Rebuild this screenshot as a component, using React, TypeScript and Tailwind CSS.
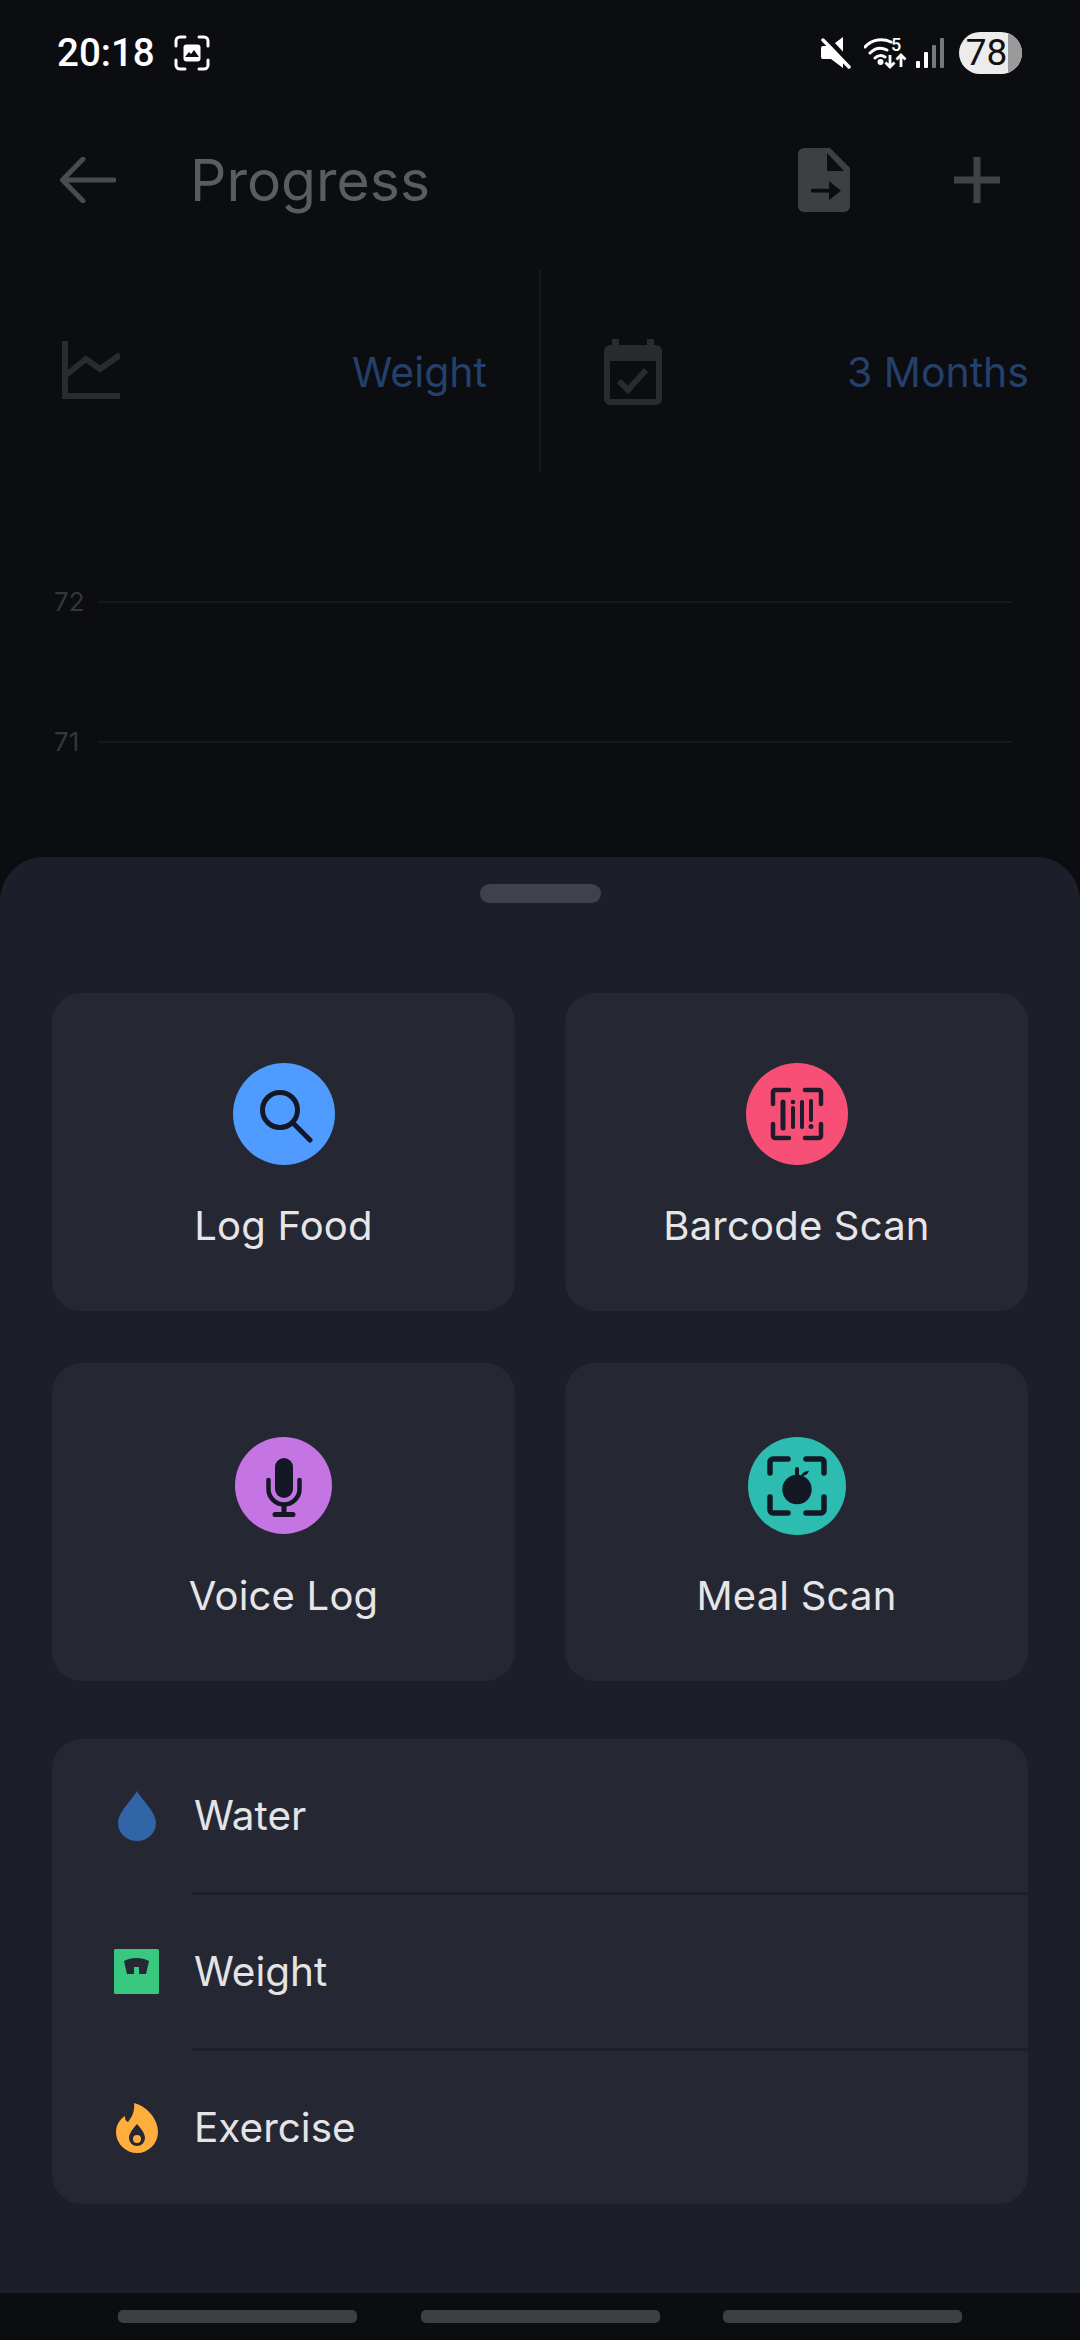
import React from "react";

const ActionCard = ({ label, color, size, top, gap, children }: { label: string; color: string; size: string; top: string; gap: string; children: React.ReactNode }) => (
  <div className={`h-[318px] rounded-[30px] bg-[#252833] flex flex-col items-center ${top}`}>
    <div className={`rounded-full flex items-center justify-center ${size} ${color}`}>{children}</div>
    <div className={`text-[40px] leading-[48px] text-[#e6e6e8] tracking-[0.2px] ${gap}`}>{label}</div>
  </div>
);

const Row = ({ label, children }: { label: string; children: React.ReactNode }) => (
  <div className="h-[153px] flex items-center">
    <div className="w-[142px] pl-[62px] flex items-center"><div className="w-[45px] flex justify-center">{children}</div></div>
    <div className="text-[40.5px] leading-[48px] text-[#e4e4e6]">{label}</div>
  </div>
);

export default function App() {
  return (
    <div className="w-[1080px] h-[2340px] bg-[#0b0d11] flex flex-col overflow-hidden font-['Inter',sans-serif]">
      <div className="h-[857px] flex flex-col">
        {/* status bar */}
        <div className="h-[105px] pl-[57px] pr-[58px] flex items-center justify-between">
          <div className="flex items-center gap-[19px]">
            <span className="font-['Roboto',sans-serif] font-medium text-[38.5px] leading-[48px] text-white">20:18</span>
            <svg width="36" height="36" viewBox="0 0 36 36" fill="none">
              <path d="M2 11V6a4 4 0 0 1 4-4h5M25 2h5a4 4 0 0 1 4 4v5M34 25v5a4 4 0 0 1-4 4h-5M11 34H6a4 4 0 0 1-4-4v-5" stroke="#fff" strokeWidth="3" strokeLinecap="round" />
              <rect x="9.500" y="9.500" width="17" height="17" rx="3" fill="#fff" />
              <path d="M11 22l4-5 2 2 3-4 5 7z" fill="#0b0d11" />
            </svg>
          </div>
          <div className="flex items-center">
            <svg width="30" height="32" viewBox="0 0 30 32" className="mr-[13px]">
              <path d="M22 0v31L10 22H2a2 2 0 0 1-2-2v-9a2 2 0 0 1 2-2h8z" fill="#fff" />
              <path d="M4 -1L32 29" stroke="#0b0d11" strokeWidth="5" />
              <path d="M2 3l26 27" stroke="#fff" strokeWidth="3.500" strokeLinecap="round" />
            </svg>
            <svg width="44" height="44" viewBox="0 -6 44 44" fill="none" className="mr-[8px]">
              <path d="M1 10C8 2 19 1 27 5M6 16c5-5 11-6 17-3M11 21c3-3 7-3 10-1" stroke="#fff" strokeWidth="3" strokeLinecap="round" />
              <circle cx="16.500" cy="25" r="3" fill="#fff" />
              <path d="M26 18v12M21.500 25.500l4.500 4.500 4.500-4.500M37 30V18M32.500 22.500l4.500-4.500 4.500 4.500" stroke="#fff" strokeWidth="2.800" />
              <text x="27" y="14" fontSize="18" fontWeight="500" fill="#fff" fontFamily="Roboto">5</text>
            </svg>
            <svg width="28" height="30" viewBox="0 0 28 30" className="mr-[15px]">
              <rect x="0" y="23" width="4" height="7" rx="1" fill="#fff" />
              <rect x="8" y="14" width="4" height="16" rx="1" fill="#fff" />
              <rect x="16" y="7" width="4" height="23" rx="1" fill="#77787a" />
              <rect x="24" y="0" width="4" height="30" rx="1" fill="#77787a" />
            </svg>
            <div className="w-[63px] h-[42px] rounded-full bg-[#ececec] overflow-hidden flex relative">
              <div className="flex-1 text-center text-[#111] font-['Roboto',sans-serif] text-[37px] leading-[42px] pl-[2px] z-10 -mr-[4px]">78</div>
              <div className="w-[14px] bg-[#9a9a9a]" />
            </div>
          </div>
        </div>
        {/* header */}
        <div className="mt-[13px] h-[124px] pl-[60px] pr-[80px] flex items-center">
          <svg width="56" height="46" viewBox="0 0 56 46" fill="none">
            <path d="M54 23H3M23 2L2.500 23 23 44" stroke="#4a4b4e" strokeWidth="5" strokeLinecap="round" strokeLinejoin="round" />
          </svg>
          <div className="ml-[74px] pt-[1px] text-[57px] leading-[68px] text-[#5b5c5f]">Progress</div>
          <svg width="52" height="64" viewBox="0 0 52 64" className="ml-auto">
            <path d="M6 0h26l20 20v38a6 6 0 0 1-6 6H6a6 6 0 0 1-6-6V6a6 6 0 0 1 6-6z" fill="#3e3f42" />
            <path d="M29 5v18h17z" fill="#0b0d11" />
            <path d="M13 43h18v-8l12 10-12 10v-8H13z" fill="#0b0d11" transform="translate(0 -1) scale(1 0.97)" />
          </svg>
          <svg width="46" height="46" viewBox="0 0 46 46" className="ml-[104px]">
            <path d="M23 0v46M0 23h46" stroke="#414244" strokeWidth="7" />
          </svg>
        </div>
        {/* selectors */}
        <div className="mt-[28px] h-[203px] flex items-center">
          <div className="w-[539px] h-full pl-[62px] pr-[52px] flex items-center justify-between">
            <svg width="58" height="58" viewBox="0 0 58 58" fill="none" className="-mt-[3px]">
              <path d="M3 0v55h55" stroke="#2a2b2e" strokeWidth="6" />
              <path d="M3 35l21-17 14 10L58 14" stroke="#2a2b2e" strokeWidth="6" />
            </svg>
            <span className="text-[41px] leading-[48px] text-[#24406b]">Weight</span>
          </div>
          <div className="w-[2px] h-full bg-[#17191e]" />
          <div className="flex-1 h-full pl-[63px] pr-[51px] flex items-center justify-between">
            <svg width="58" height="66" viewBox="0 0 58 66">
              <path d="M8 0h7v6h28V0h7v6h2a6 6 0 0 1 6 6v48a6 6 0 0 1-6 6H6a6 6 0 0 1-6-6V12a6 6 0 0 1 6-6h2z" fill="#2a2b2e" />
              <rect x="6" y="22" width="46" height="38" fill="#0b0d11" />
              <path d="M15 42l9 9 18-20" stroke="#2a2b2e" strokeWidth="6" fill="none" />
            </svg>
            <span className="text-[41px] leading-[48px] text-[#24406b]">3 Months</span>
          </div>
        </div>
        {/* chart */}
        <div className="mt-[113px] pl-[54px] pr-[68px] flex flex-col gap-[108px]">
          <div className="flex items-center h-[32px]">
            <span className="w-[44px] text-[26px] leading-[32px] text-[#35363a]">72</span>
            <div className="flex-1 h-[2px] bg-[#16181d]" />
          </div>
          <div className="flex items-center h-[32px]">
            <span className="w-[44px] text-[26px] leading-[32px] text-[#35363a]">71</span>
            <div className="flex-1 h-[2px] bg-[#16181d]" />
          </div>
        </div>
      </div>

      {/* bottom sheet */}
      <div className="h-[1436px] rounded-t-[44px] bg-[#1c1f2a] px-[52px] pt-[27px] flex flex-col">
        <div className="self-center w-[121px] h-[19px] rounded-full bg-[#3f424c]" />
        <div className="mt-[90px] grid grid-cols-2 gap-x-[50px] gap-y-[52px]">
          <ActionCard label="Log Food" color="bg-[#4f9bff]" size="w-[102px] h-[102px]" top="pt-[70px]" gap="mt-[37px]">
            <svg width="58" height="58" viewBox="0 0 58 58" fill="none">
              <circle cx="25" cy="25" r="17.500" stroke="#141824" strokeWidth="5" />
              <path d="M38 38l17 17" stroke="#141824" strokeWidth="5" strokeLinecap="round" />
            </svg>
          </ActionCard>
          <ActionCard label="Barcode Scan" color="bg-[#f84f77]" size="w-[102px] h-[102px]" top="pt-[70px]" gap="mt-[37px]">
            <svg width="54" height="54" viewBox="0 0 54 54" fill="none" stroke="#1c1c2c" strokeLinecap="round">
              <path d="M3 17V5a2 2 0 0 1 2-2h14M35 3h14a2 2 0 0 1 2 2v12M51 37v12a2 2 0 0 1-2 2H35M19 51H5a2 2 0 0 1-2-2V37" strokeWidth="4.500" />
              <path d="M13 15v26" strokeWidth="5" />
              <path d="M23 21v19" strokeWidth="4" />
              <path d="M32 15v25" strokeWidth="4" />
              <path d="M41 14v19" strokeWidth="4" />
              <circle cx="23" cy="15" r="2.300" fill="#1c1c2c" stroke="none" />
              <circle cx="41" cy="39.500" r="2.500" fill="#1c1c2c" stroke="none" />
            </svg>
          </ActionCard>
          <ActionCard label="Voice Log" color="bg-[#c474e3]" size="w-[97px] h-[97px]" top="pt-[74px]" gap="mt-[38px]">
            <svg width="36" height="60" viewBox="0 0 36 60" fill="none" className="mt-[4px]">
              <rect x="9" y="0" width="18" height="40" rx="9" fill="#141824" />
              <path d="M2.500 22v9a15.500 15.500 0 0 0 31 0v-9" stroke="#141824" strokeWidth="4.500" strokeLinecap="round" />
              <path d="M18 47v9M9 56.500h18" stroke="#141824" strokeWidth="5" strokeLinecap="round" />
            </svg>
          </ActionCard>
          <ActionCard label="Meal Scan" color="bg-[#2dbcb0]" size="w-[98px] h-[98px]" top="pt-[74px]" gap="mt-[37px]">
            <svg width="60" height="60" viewBox="0 0 60 60" fill="none">
              <path d="M3 17V6a3 3 0 0 1 3-3h15M39 3h15a3 3 0 0 1 3 3v11M57 41v13a3 3 0 0 1-3 3H39M21 57H6a3 3 0 0 1-3-3V41" stroke="#141824" strokeWidth="5.500" strokeLinecap="round" />
              <circle cx="30" cy="33.500" r="14.700" fill="#141824" />
              <path d="M30 22v-9" stroke="#141824" strokeWidth="4" strokeLinecap="round" />
              <path d="M34 20c1-3 4-5 8-5-1 3-4 5-8 5z" fill="#141824" />
            </svg>
          </ActionCard>
        </div>
        <div className="mt-[58px] h-[465px] rounded-[30px] bg-[#252833] flex flex-col">
          <Row label="Water">
            <svg width="38" height="50" viewBox="0 0 38 50">
              <path d="M19 0C24 9 38 21 38 32a19 18 0 0 1-38 0C0 21 14 9 19 0z" fill="#3264a8" />
            </svg>
          </Row>
          <div className="ml-[140px] h-[3px] bg-[#1c1f28]" />
          <Row label="Weight">
            <svg width="45" height="45" viewBox="0 0 45 45">
              <rect width="45" height="45" rx="1.500" fill="#38c880" />
              <path d="M10 12c7-4 18-4 25 0l-3 13h-7v-7h-5v7h-7z" fill="#252833" />
            </svg>
          </Row>
          <div className="ml-[140px] h-[3px] bg-[#1c1f28]" />
          <Row label="Exercise">
            <svg width="42" height="50" viewBox="0 0 42 50">
              <path d="M18 0c12 3 24 15 24 29a21 21 0 0 1-42 0c0-7 4-13 9-16 0 4 1 5 3 6 4-5 7-11 6-19z" fill="#ffad3c" />
              <path d="M21 21c4 5 8 9 8 14a8 8 0 0 1-16 0c0-5 4-9 8-14z" fill="#252833" />
              <circle cx="21" cy="36" r="4" fill="#ffad3c" />
            </svg>
          </Row>
        </div>
      </div>

      {/* nav bar */}
      <div className="h-[47px] flex items-start justify-between pt-[17px] pl-[118px] pr-[118px]">
        <div className="w-[239px] h-[13px] rounded-[5px] bg-[#3e3f43]" />
        <div className="w-[239px] h-[13px] rounded-[5px] bg-[#3e3f43]" />
        <div className="w-[239px] h-[13px] rounded-[5px] bg-[#3e3f43]" />
      </div>
    </div>
  );
}
